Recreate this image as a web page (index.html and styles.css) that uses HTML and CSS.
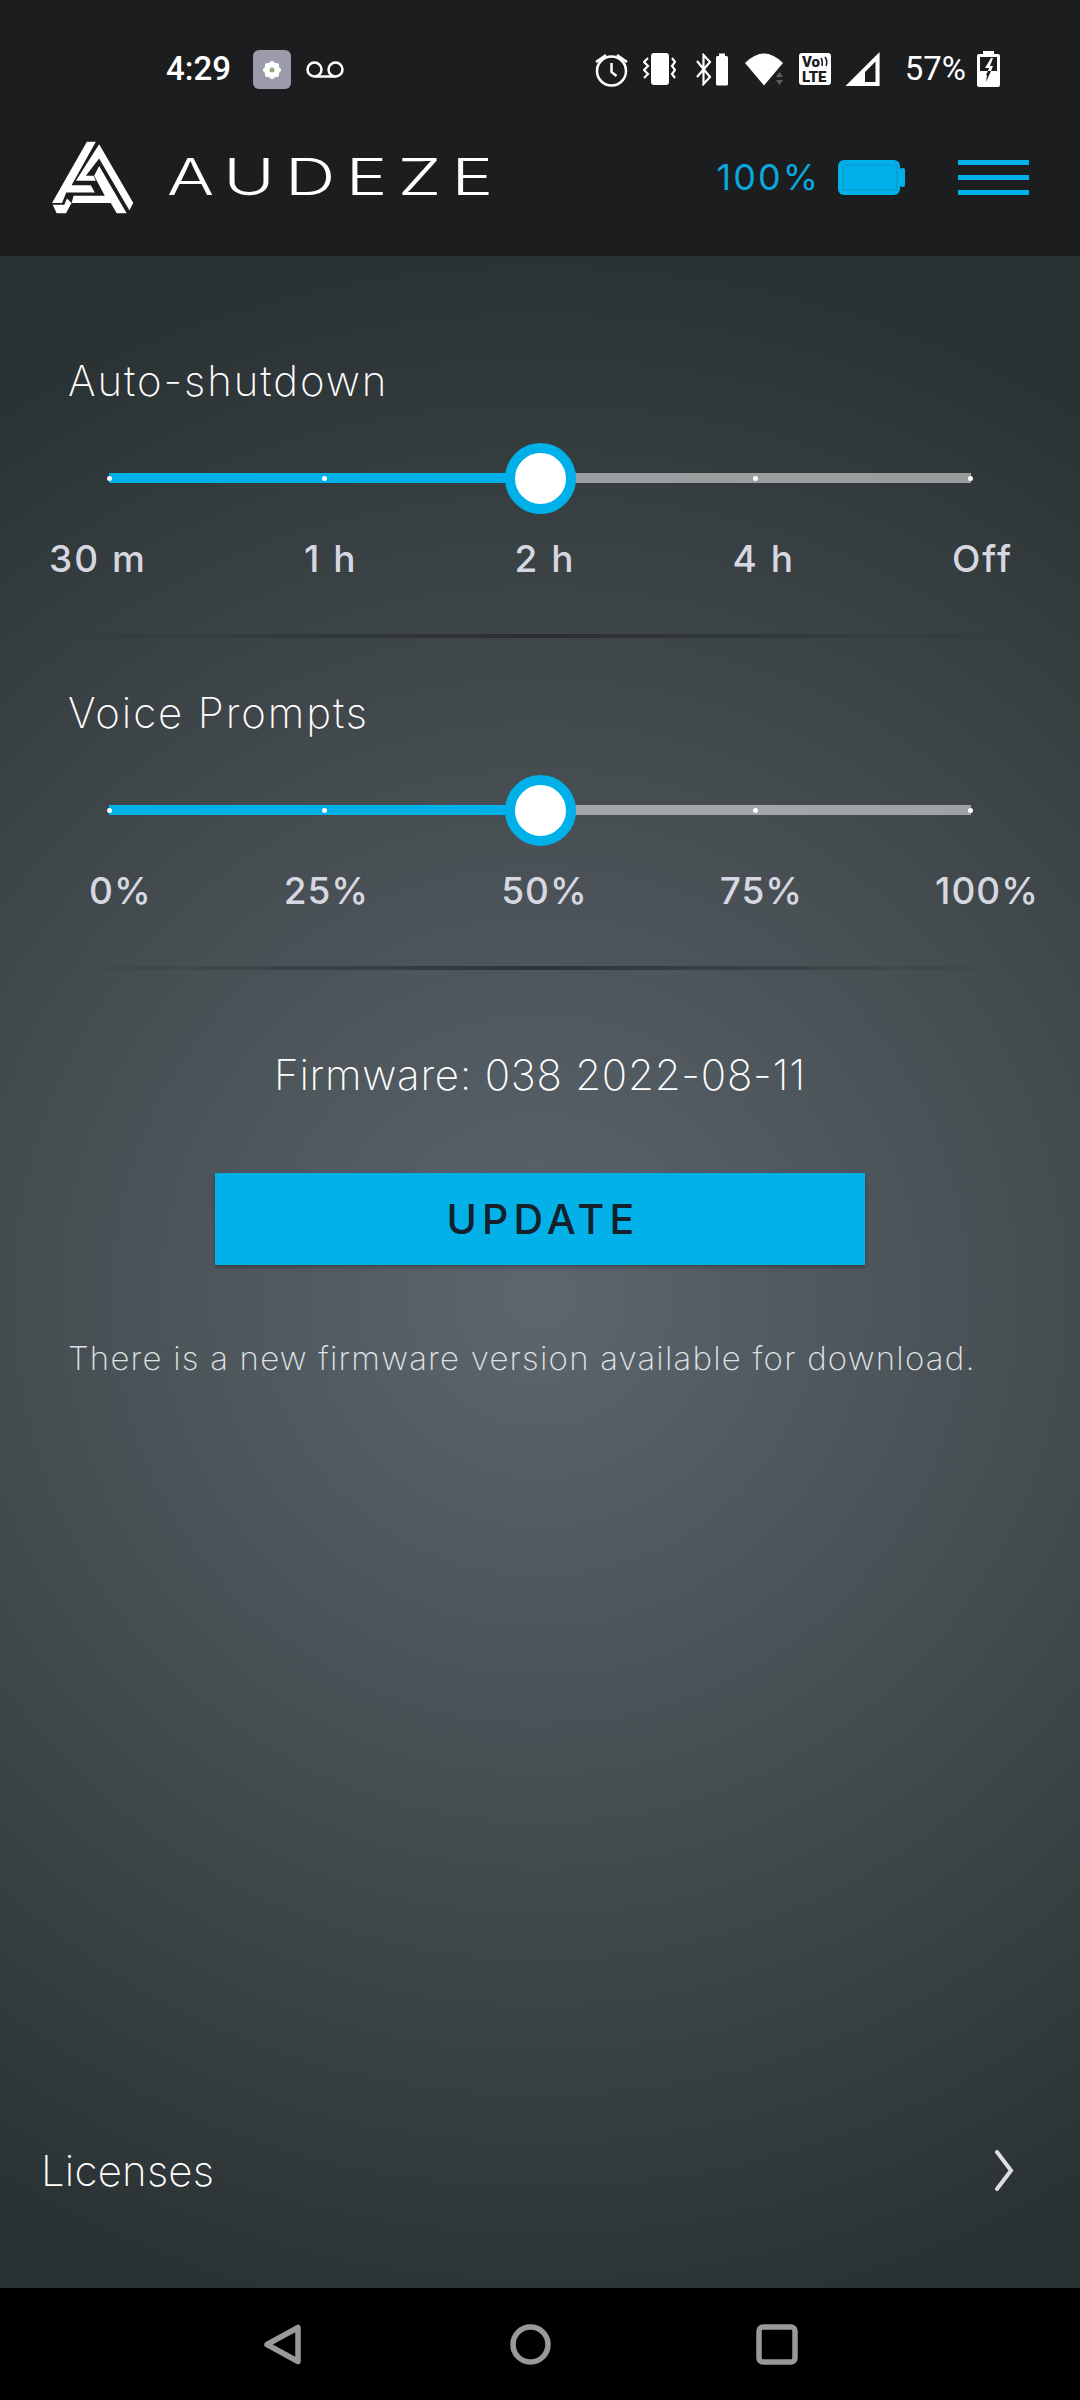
FILE: index.html
```html
<!doctype html>
<html lang="en">
  <head>
    <meta charset="UTF-8" />
    <title>Audeze - Settings</title>
    <link rel="stylesheet" href="styles.css">
  </head>
  <body>
    <div class="phone">
      <header class="topbar">
        <div class="status-bar">
          <div class="status-left">
            <span class="status-text">4:29</span>
            <svg class="ic-app" viewBox="252 49 38 39" width="38" height="39">
              <rect x="252" y="49" width="38" height="39" rx="6" fill="#9b9bab" />
              <g fill="#fff">
                <rect x="264" y="62" width="14" height="14" rx="2" />
                <rect x="264" y="62" width="14" height="14" rx="2" transform="rotate(45 271 69)" />
              </g>
              <circle cx="271" cy="69" r="2.5" fill="#8fb080" />
            </svg>
            <svg class="ic-voicemail" viewBox="305 60 38 17" width="38" height="17">
              <path d="M313.500 75.500h21" fill="none" stroke="#fff" stroke-width="2.500" />
              <circle cx="313.500" cy="68.500" r="7" fill="none" stroke="#fff" stroke-width="2.500" />
              <circle cx="334.500" cy="68.500" r="7" fill="none" stroke="#fff" stroke-width="2.500" />
            </svg>
          </div>
          <div class="status-right">
            <svg viewBox="597 51 33 35" width="33" height="35">
              <g fill="none" stroke="#fff" stroke-width="2.500">
                <circle cx="613.500" cy="70" r="14.500" />
                <path d="M613.500 62v9l5 4" />
                <path d="M598 61l10-7M629 61l-10-7" />
              </g>
            </svg>
            <svg class="ic-vibrate" viewBox="645 53 33 32" width="33" height="32">
              <rect x="653" y="53" width="18" height="32" rx="3" fill="#fff" />
              <path d="M650 58l-4 4 4 4-4 4 4 4-4 4M674 58l3 4-3 4 3 4-3 4 3 4" fill="none" stroke="#fff" stroke-width="2.200" />
            </svg>
            <svg class="ic-bt" viewBox="698 52 32 33" width="32" height="33">
              <path d="M699 60l13 16-6.500 7V54l6.500 7-13 15" fill="none" stroke="#fff" stroke-width="2.200" />
              <path d="M721 55v-2.500h6V55h1.500a1.500 1.500 0 0 1 1.500 1.500V83a1.500 1.500 0 0 1-1.500 1.500h-9A1.500 1.500 0 0 1 718 83V56.500a1.500 1.500 0 0 1 1.500-1.500z" fill="#fff" />
            </svg>
            <svg class="ic-wifi" viewBox="747 52 38 33" width="38" height="33">
              <path d="M747 62Q766 43 785 62L766 84.500z" fill="#fff" />
              <path d="M781.500 71l3.500 5h-7zM781.500 84l3.500-5h-7z" fill="#5b5d5f" />
            </svg>
            <svg class="ic-volte" viewBox="801 52 32 32" width="32" height="32">
              <rect x="801" y="52" width="32" height="32" rx="3" fill="#fff" />
              <text class="volte-text" x="804" y="66">Vo</text>
              <text class="volte-text" x="804" y="81">LTE</text>
              <path d="M823 57q2 3 1 8M827 56q3 4 1 9" fill="none" stroke="#1b1d1f" stroke-width="1.500" />
            </svg>
            <svg class="ic-signal" viewBox="847 52 35 34" width="35" height="34">
              <path d="M847.500 86L881.600 52V86zM867 72V82H877.500V61.500z" fill="#fff" fill-rule="evenodd" />
            </svg>
            <span class="status-text ic-percent">57%</span>
            <svg class="ic-charge" viewBox="977 51 23 36" width="23" height="36">
              <path d="M983 54v-3h11v3h4a2 2 0 0 1 2 2v29a2 2 0 0 1-2 2h-19a2 2 0 0 1-2-2V56a2 2 0 0 1 2-2z" fill="#fff" />
              <rect x="980" y="57" width="17" height="14" fill="#1b1d1f" />
              <path d="M991 58l-6 10h4l-1 3h3l2-5h-3l3-8z" fill="#fff" />
              <path d="M988 71h3l-5 11 1-7h-1z" fill="#1b1d1f" />
            </svg>
          </div>
        </div>
        <div class="brand-bar">
          <svg class="logo" viewBox="60 45 250 220" width="83" height="73">
            <g fill="#fff">
              <path d="M168 47H195L122 178H180L192 200H106L93 232H63z" />
              <path d="M65 237H100L108 218 122 232 105 263H77z" />
              <path d="M205 55L308 232 296 254 205 98 165 150H188L195 165H135z" />
              <path d="M205 120L288 263H258L240 232H122L128 210H222L190 150z" />
            </g>
          </svg>
          <span class="brand-name">AUDEZE</span>
          <span class="battery-text">100%</span>
          <svg class="battery" viewBox="838 162 67 35" width="67" height="35">
            <rect x="838" y="162" width="62" height="35" rx="6" fill="#00b0e8" />
            <rect x="900" y="170" width="5" height="19" rx="2" fill="#00b0e8" />
            <rect x="843" y="167" width="54" height="25" fill="none" stroke="#0a95c4" stroke-width="1" />
          </svg>
          <div class="hamburger">
            <span></span>
            <span></span>
            <span></span>
          </div>
        </div>
      </header>

      <main class="content">
        <section class="setting">
          <h2 class="setting-title">Auto-shutdown</h2>
          <div class="slider">
            <div class="track">
              <span class="tick"></span>
              <span class="tick"></span>
              <span class="tick"></span>
              <span class="tick"></span>
              <span class="tick"></span>
            </div>
            <div class="thumb"></div>
          </div>
          <div class="labels labels-time">
            <span>30 m</span>
            <span>1 h</span>
            <span>2 h</span>
            <span>4 h</span>
            <span>Off</span>
          </div>
          <div class="divider"></div>
        </section>

        <section class="setting">
          <h2 class="setting-title">Voice Prompts</h2>
          <div class="slider">
            <div class="track">
              <span class="tick"></span>
              <span class="tick"></span>
              <span class="tick"></span>
              <span class="tick"></span>
              <span class="tick"></span>
            </div>
            <div class="thumb"></div>
          </div>
          <div class="labels labels-volume">
            <span>0%</span>
            <span>25%</span>
            <span>50%</span>
            <span>75%</span>
            <span>100%</span>
          </div>
          <div class="divider"></div>
        </section>

        <section class="firmware">
          <p class="firmware-version">Firmware: 038 2022-08-11</p>
          <button class="update-btn" type="button">UPDATE</button>
          <p class="firmware-note">There is a new firmware version available for download.</p>
        </section>

        <div class="licenses">
          <span>Licenses</span>
          <svg viewBox="0 0 20 41" width="20" height="41">
            <path d="M3 2L17 20.500 3 39" fill="none" stroke="#dcdde8" stroke-width="4" stroke-linecap="round" />
          </svg>
        </div>
      </main>

      <nav class="nav-bar">
        <svg viewBox="264 2323 37 41" width="37" height="41">
          <path d="M298 2326.500V2360.500L267 2343.500z" fill="none" stroke="#999" stroke-width="5.500" stroke-linejoin="round" />
        </svg>
        <svg viewBox="510 2323 41 41" width="41" height="41">
          <circle cx="530.500" cy="2343.500" r="17.500" fill="none" stroke="#999" stroke-width="5.500" />
        </svg>
        <svg class="nav-recent" viewBox="756 2323 42 41" width="42" height="41">
          <rect x="759" y="2326" width="36" height="35" rx="4" fill="none" stroke="#999" stroke-width="5.500" />
        </svg>
      </nav>
    </div>
  </body>
</html>
```

FILE: styles.css
```css
html,
body {
  margin: 0;
  padding: 0;
}

body {
  width: 1080px;
  height: 2400px;
  font-family: Inter, "Liberation Sans", sans-serif;
  overflow: hidden;
}

.phone {
  display: flex;
  flex-direction: column;
  height: 2400px;
  background: #000;
}

/* Top bar */
.topbar {
  height: 256px;
  background: #1b1d1f;
  color: #fff;
}

.status-bar {
  display: flex;
  justify-content: space-between;
  align-items: center;
  box-sizing: border-box;
  height: 98px;
  padding: 40px 80px 0 166px;
}

.status-left,
.status-right {
  display: flex;
  align-items: center;
}

.status-text {
  font-family: Roboto, sans-serif;
  font-size: 33px;
  font-weight: 500;
  line-height: 40px;
}

.ic-app {
  margin-left: 22px;
}

.ic-voicemail {
  margin-left: 15px;
}

.ic-vibrate {
  margin-left: 15px;
}

.ic-bt {
  margin-left: 20px;
}

.ic-wifi {
  margin-left: 17px;
}

.ic-volte {
  margin-left: 16px;
}

.ic-signal {
  margin-left: 14px;
}

.ic-percent {
  margin-left: 25px;
  font-weight: 400;
}

.ic-charge {
  margin-left: 11px;
}

.volte-text {
  font-family: Roboto, sans-serif;
  font-size: 15px;
  font-weight: 900;
  fill: #1b1d1f;
}

.brand-bar {
  display: flex;
  align-items: center;
  height: 158px;
  padding: 0 51px;
}

.logo {
  flex: none;
}

.brand-name {
  width: 321px;
  margin-left: 33px;
  font-size: 50px;
  font-weight: 300;
  letter-spacing: 7.4px;
  transform: scaleX(1.4);
  transform-origin: left center;
}

.battery-text {
  margin-left: auto;
  color: #0aa8dc;
  font-size: 36px;
  font-weight: 400;
  letter-spacing: 2px;
}

.battery {
  margin-left: 18px;
}

.hamburger {
  display: flex;
  flex-direction: column;
  gap: 10px;
  width: 71px;
  margin-left: 53px;
}

.hamburger span {
  height: 5px;
  background: #00b0e8;
}

/* Main area */
.content {
  flex: 1;
  display: flex;
  flex-direction: column;
  padding-top: 50px;
  color: #fff;
  background: radial-gradient(circle 1040px at 540px 1040px, #5d666e 0%, #454d51 50%, #2b3233 100%);
}

.setting {
  padding-top: 50px;
}

.setting-title {
  margin: 0;
  padding-left: 68px;
  font-size: 42px;
  font-weight: 200;
  letter-spacing: 1.9px;
  line-height: 50px;
}

.slider {
  position: relative;
  display: flex;
  align-items: center;
  height: 71px;
  margin: 37px 109px 0;
}

.track {
  display: flex;
  justify-content: space-between;
  align-items: center;
  flex: 1;
  height: 10px;
  margin-bottom: 1px;
  background: linear-gradient(to right, #00b0e8 50%, rgba(255, 255, 255, 0.5) 50%);
}

.tick {
  width: 5px;
  height: 5px;
  margin: 0 -2px;
  border-radius: 50%;
  background: #fff;
}

.thumb {
  position: absolute;
  left: 50%;
  top: 0;
  box-sizing: border-box;
  width: 71px;
  height: 71px;
  margin-left: -35px;
  border: 10px solid #00b0e8;
  border-radius: 50%;
  background: #fff;
}

.labels {
  display: flex;
  justify-content: space-between;
  margin-top: 20px;
  color: #d6d7e1;
  font-size: 37px;
  font-weight: 500;
  letter-spacing: 2px;
  line-height: 50px;
}

.labels-time {
  padding: 0 67px 0 49px;
}

.labels-volume {
  padding: 0 41px 0 89px;
  letter-spacing: 1px;
}

.divider {
  height: 4px;
  margin: 50px 60px 0;
  background: linear-gradient(to right, rgba(32, 37, 40, 0), rgba(32, 37, 40, 0.7) 50%, rgba(32, 37, 40, 0));
}

.firmware {
  display: flex;
  flex-direction: column;
  align-items: center;
  padding-top: 80px;
}

.firmware-version {
  margin: 0;
  font-size: 42px;
  font-weight: 200;
  letter-spacing: 0.75px;
  line-height: 50px;
}

.update-btn {
  width: 650px;
  height: 92px;
  margin-top: 73px;
  padding: 0 0 0 6px;
  border: none;
  background: #02b1e7;
  box-shadow: 0 2px 4px rgba(0, 0, 0, 0.3);
  color: #14202a;
  font-family: inherit;
  font-size: 41px;
  font-weight: 500;
  letter-spacing: 5.2px;
}

.firmware-note {
  align-self: flex-start;
  margin: 73px 0 0;
  padding-left: 68px;
  color: #dfe2e5;
  font-size: 33px;
  font-weight: 200;
  letter-spacing: 1.2px;
  line-height: 40px;
}

.licenses {
  display: flex;
  justify-content: space-between;
  align-items: center;
  height: 50px;
  margin-top: auto;
  padding: 0 66px 93px 41px;
  font-size: 42px;
  font-weight: 200;
  letter-spacing: 0.2px;
}

/* Android nav */
.nav-bar {
  display: flex;
  align-items: center;
  flex: none;
  gap: 209px;
  height: 112px;
  padding: 0 0 0 264px;
  background: #000;
}

.nav-recent {
  margin-left: -4px;
}
```
